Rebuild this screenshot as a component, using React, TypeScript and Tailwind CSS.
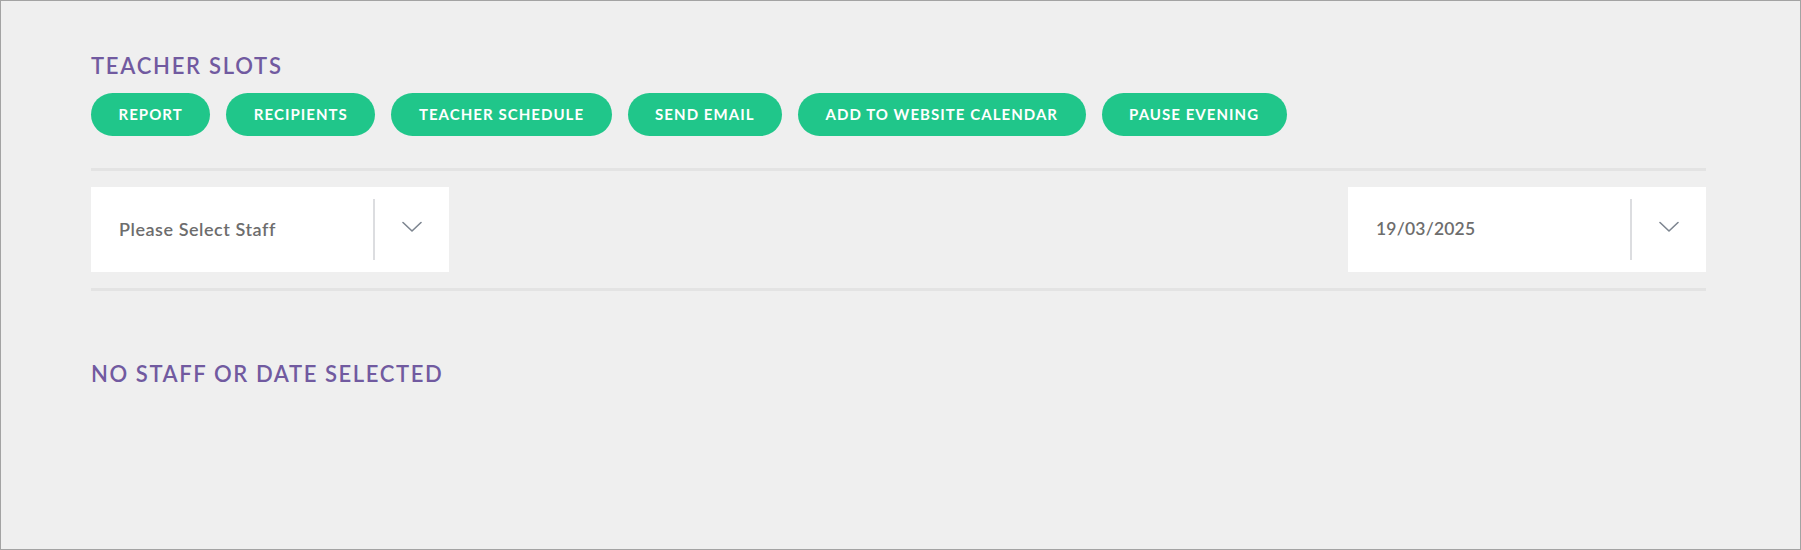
const actions = [
  "REPORT",
  "RECIPIENTS",
  "TEACHER SCHEDULE",
  "SEND EMAIL",
  "ADD TO WEBSITE CALENDAR",
  "PAUSE EVENING",
];

function Chevron() {
  return (
    <svg width="20" height="12" viewBox="0 0 20 12" fill="none">
      <path
        d="M1 1.5 L10 10 L19 1.5"
        stroke="#7d8590"
        strokeWidth="1.6"
        strokeLinecap="round"
        strokeLinejoin="round"
      />
    </svg>
  );
}

function SelectBox({ label, textClass }: { label: string; textClass: string }) {
  return (
    <div className="flex h-[85px] w-[358px] items-center bg-white">
      <div className={`flex-1 pl-[28px] font-semibold text-[#6d6d6d] ${textClass}`}>
        {label}
      </div>
      <div className="h-[61px] w-[2px] bg-[#dcdde0]" />
      <div className="flex w-[74px] items-center justify-center pb-[6px]">
        <Chevron />
      </div>
    </div>
  );
}

export default function App() {
  return (
    <div
      className="h-[550px] w-full border border-[#a3a3a3] bg-[#efefef] pl-[90px] pr-[94px]"
      style={{ fontFamily: "Lato, 'Open Sans', sans-serif" }}
    >
      <h1 className="pt-[51px] text-[22px] font-semibold leading-[28px] tracking-[1.75px] text-[#715aa0]">
        TEACHER SLOTS
      </h1>
      <div className="mt-[13px] flex gap-[16px]">
        {actions.map((a) => (
          <button
            key={a}
            className="h-[43px] rounded-full bg-[#20c68a] px-[27.5px] text-[15px] font-bold tracking-[1.05px] text-white"
          >
            {a}
          </button>
        ))}
      </div>
      <div className="mt-[32px] h-[3px] bg-[#e3e3e3]" />
      <div className="my-[16px] flex justify-between">
        <SelectBox label="Please Select Staff" textClass="text-[18px] tracking-[0.55px]" />
        <SelectBox label="19/03/2025" textClass="text-[17.5px] tracking-[0.2px]" />
      </div>
      <div className="h-[3px] bg-[#e3e3e3]" />
      <h2 className="mt-[69px] text-[22px] font-semibold leading-[28px] tracking-[1.6px] text-[#715aa0]">
        NO STAFF OR DATE SELECTED
      </h2>
    </div>
  );
}
